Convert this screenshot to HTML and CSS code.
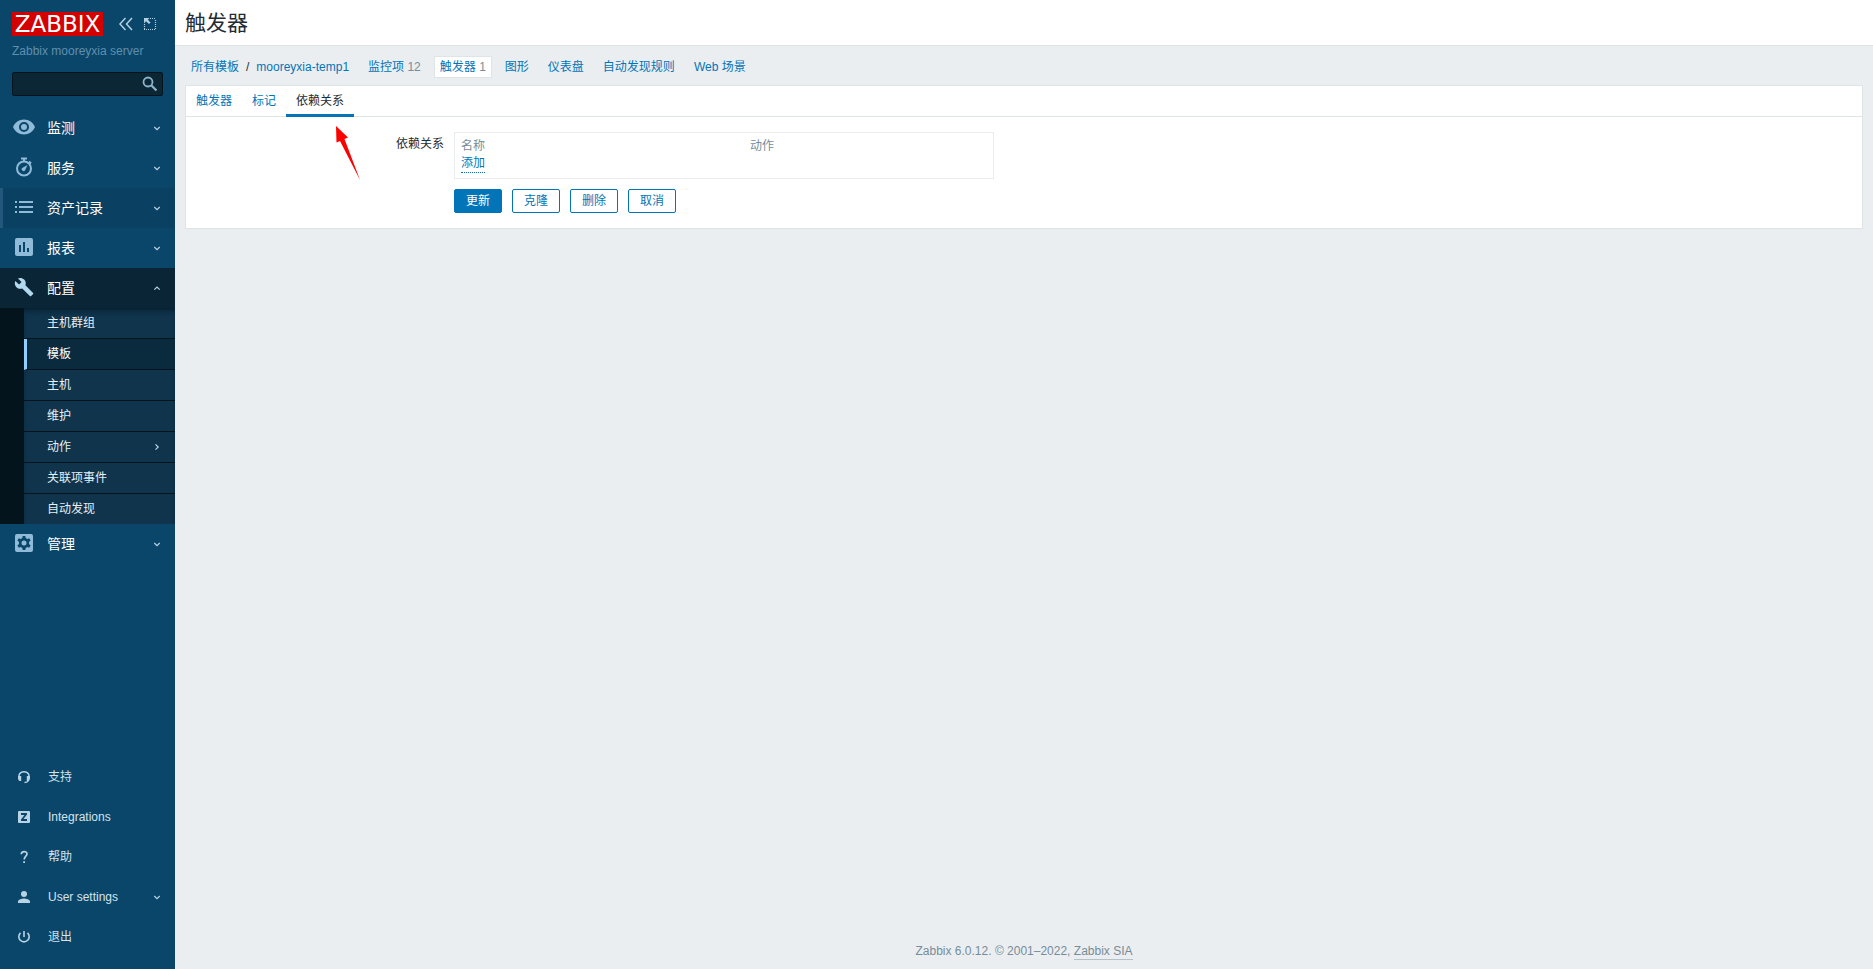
FILE: index.html
```html
<!DOCTYPE html>
<html lang="zh-CN">
<head>
<meta charset="utf-8">
<title>触发器</title>
<link rel="stylesheet" href="styles.css">
</head>
<body>
<svg class="sprite" aria-hidden="true">
  <symbol id="down" viewBox="0 0 8 8"><path d="M1.300 3 4 5.700 6.700 3" fill="none" stroke="currentColor" stroke-width="1.200"/></symbol>
  <symbol id="up" viewBox="0 0 8 8"><path d="M1.300 5.700 4 3 6.700 5.700" fill="none" stroke="currentColor" stroke-width="1.200"/></symbol>
  <symbol id="right" viewBox="0 0 8 8"><path d="M2.500 1.300 5.200 4 2.500 6.700" fill="none" stroke="currentColor" stroke-width="1.200"/></symbol>
</svg>
<aside class="sidebar">
  <div class="brand">
    <a class="logo" href="#">ZABBIX</a>
    <button class="tool" aria-label="收起侧边栏"><svg width="16" height="14" viewBox="0 0 16 14"><path d="M7.500 1 2 7l5.500 6M14 1 8.500 7l5.500 6" fill="none" stroke="currentColor" stroke-width="1.500"/></svg></button>
    <button class="tool" aria-label="隐藏侧边栏"><svg width="14" height="14" viewBox="0 0 14 14"><path d="M7 1.500h6M12.500 3v10M1.500 7v6M1 12.500h12" fill="none" stroke="currentColor" stroke-width="1.200" stroke-dasharray="1 1"/><path d="M1 1h5.500L4.800 2.700 7.500 5.500 6 7 3 4.300 1 6.500z" fill="currentColor"/></svg></button>
  </div>
  <div class="server">Zabbix mooreyxia server</div>
  <form class="search">
    <input class="search-input" type="text" aria-label="搜索">
    <button class="search-button" type="button" aria-label="搜索"><svg width="16" height="16" viewBox="0 0 16 16" fill="none" stroke="currentColor"><circle cx="6" cy="6" r="4.500" stroke-width="1.800"/><path d="m9.500 9.500 5 5" stroke-width="2.200"/></svg></button>
  </form>
  <nav class="menu">
    <a class="item" href="#"><svg class="icon" viewBox="0 0 24 24"><path d="M12 4.500C7 4.500 2.700 7.600 1 12c1.700 4.400 6 7.500 11 7.500s9.300-3.100 11-7.500c-1.700-4.400-6-7.500-11-7.500zM12 17a5 5 0 1 1 0-10 5 5 0 0 1 0 10zm0-8a3 3 0 1 0 0 6 3 3 0 0 0 0-6z"/></svg><span class="text">监测</span><svg class="chevron"><use href="#down"/></svg></a>
    <a class="item" href="#"><svg class="icon" viewBox="0 0 24 24"><g fill="none" stroke="currentColor"><circle cx="12" cy="13.500" r="7" stroke-width="2"/><path d="M9 3.500h6M12 3.500V6M17 6.500l2 2" stroke-width="2"/></g><path d="m15.500 10-2.300 5a1.800 1.800 0 1 1-2.600-2.300z"/></svg><span class="text">服务</span><svg class="chevron"><use href="#down"/></svg></a>
    <a class="item hovered" href="#"><svg class="icon" viewBox="0 0 24 24"><path d="M3 6h2v2H3zm4 0h14v2H7zM3 11h2v2H3zm4 0h14v2H7zm-4 5h2v2H3zm4 0h14v2H7z"/></svg><span class="text">资产记录</span><svg class="chevron"><use href="#down"/></svg></a>
    <a class="item" href="#"><svg class="icon" viewBox="0 0 24 24"><path d="M19 3H5a2 2 0 0 0-2 2v14c0 1.100.9 2 2 2h14a2 2 0 0 0 2-2V5a2 2 0 0 0-2-2zM9 17H7v-7h2zm4 0h-2V7h2zm4 0h-2v-4h2z"/></svg><span class="text">报表</span><svg class="chevron"><use href="#down"/></svg></a>
    <a class="item open" href="#"><svg class="icon" viewBox="0 0 24 24"><g transform="translate(2 2) scale(.84)"><path d="m22.700 19-9.100-9.100c.9-2.300.4-5-1.500-6.900-2-2-5-2.400-7.400-1.300L9 6 6 9 1.600 4.700C.4 7.100.9 10.100 2.900 12.100c1.900 1.900 4.600 2.400 6.900 1.500l9.100 9.100c.4.4 1 .4 1.400 0l2.300-2.300c.5-.4.5-1.100.1-1.400z"/></g></svg><span class="text">配置</span><svg class="chevron"><use href="#up"/></svg></a>
    <div class="submenu">
      <a class="sub" href="#">主机群组</a>
      <a class="sub current" href="#">模板</a>
      <a class="sub" href="#">主机</a>
      <a class="sub" href="#">维护</a>
      <a class="sub" href="#"><span class="text">动作</span><svg class="chevron"><use href="#right"/></svg></a>
      <a class="sub" href="#">关联项事件</a>
      <a class="sub" href="#">自动发现</a>
    </div>
    <a class="item" href="#"><svg class="icon" viewBox="0 0 24 24"><path fill-rule="evenodd" d="M5 3h14a2 2 0 0 1 2 2v14a2 2 0 0 1-2 2H5a2 2 0 0 1-2-2V5a2 2 0 0 1 2-2zm5.700 2-.4 2-1.600.9-1.900-.7-1.400 2.400 1.600 1.400v2l-1.600 1.400 1.400 2.400 1.900-.7 1.600.9.4 2h2.600l.4-2 1.600-.9 1.900.7 1.400-2.400L17 13v-2l1.600-1.400-1.400-2.400-1.900.7-1.600-.9-.4-2zM12 9.500a2.500 2.500 0 1 1 0 5 2.500 2.500 0 0 1 0-5z"/></svg><span class="text">管理</span><svg class="chevron"><use href="#down"/></svg></a>
  </nav>
  <nav class="menu-user">
    <a class="item small" href="#"><svg class="icon" viewBox="0 0 24 24"><path d="M7.500 15.500C5.500 11 7.500 6.700 12 6.700s6.500 4.300 4.500 8.800c-.7 1.500-2 2-4 2" fill="none" stroke="currentColor" stroke-width="1.500"/><path d="M6.200 11h3v5H7.700l-1.500-2zm11.600 0h-3v5h1.500l1.500-2z"/></svg><span class="text">支持</span></a>
    <a class="item small" href="#"><svg class="icon" viewBox="0 0 24 24"><path fill-rule="evenodd" d="M7 6h10a1 1 0 0 1 1 1v10a1 1 0 0 1-1 1H7a1 1 0 0 1-1-1V7a1 1 0 0 1 1-1zm2 2v2h3.500L9 14.500V16h6v-2h-3.500L15 9.500V8z"/></svg><span class="text">Integrations</span></a>
    <a class="item small" href="#"><svg class="icon" viewBox="0 0 24 24"><path d="M9.300 9.300C9.300 5.700 15 5.700 15 9c0 2-2.800 2.500-2.800 5.500" fill="none" stroke="currentColor" stroke-width="1.700"/><path d="M11.200 16.200H13V18h-1.800z"/></svg><span class="text">帮助</span></a>
    <a class="item small" href="#"><svg class="icon" viewBox="0 0 24 24"><circle cx="12" cy="9" r="3"/><path d="M6 18v-1.500c0-2 4-3 6-3s6 1 6 3V18z"/></svg><span class="text">User settings</span><svg class="chevron"><use href="#down"/></svg></a>
    <a class="item small" href="#"><svg class="icon" viewBox="0 0 24 24"><path d="M12 6v6M8.500 7.800a5.200 5.200 0 1 0 7 0" fill="none" stroke="currentColor" stroke-width="1.600"/></svg><span class="text">退出</span></a>
  </nav>
</aside>
<div class="page">
  <header class="header"><h1 class="title">触发器</h1></header>
  <main class="content">
    <nav class="crumbs">
      <span class="path"><a href="#">所有模板</a><span>/</span><a href="#">mooreyxia-temp1</a></span>
      <span class="crumb"><a href="#">监控项</a> <span class="count">12</span></span>
      <span class="crumb selected"><a href="#">触发器</a> <span class="count">1</span></span>
      <span class="crumb"><a href="#">图形</a></span>
      <span class="crumb"><a href="#">仪表盘</a></span>
      <span class="crumb"><a href="#">自动发现规则</a></span>
      <span class="crumb"><a href="#">Web 场景</a></span>
    </nav>
    <section class="card">
      <nav class="tabs">
        <a class="tab" href="#">触发器</a>
        <a class="tab" href="#">标记</a>
        <a class="tab active" href="#">依赖关系</a>
      </nav>
      <svg class="pointer" width="26" height="56" viewBox="0 0 26 56" aria-hidden="true"><path d="M1 1 13 12.500 9.500 14 25 55 5 16 1.500 17.500z" fill="#f00"/></svg>
      <form class="form">
        <div class="label" id="deps">依赖关系</div>
        <div class="frame">
          <table class="table" aria-labelledby="deps">
            <thead><tr><th>名称</th><th>动作</th></tr></thead>
            <tbody><tr><td colspan="2"><button class="add" type="button">添加</button></td></tr></tbody>
          </table>
        </div>
        <div class="actions">
          <button class="button primary" type="button">更新</button>
          <button class="button" type="button">克隆</button>
          <button class="button" type="button">删除</button>
          <button class="button" type="button">取消</button>
        </div>
      </form>
    </section>
  </main>
  <footer class="footer">Zabbix 6.0.12. © 2001–2022, <a class="footer-link" href="#">Zabbix SIA</a></footer>
</div>
</body>
</html>
```
FILE: styles.css
```css
* { box-sizing: border-box; }
body {
  margin: 0;
  min-height: 100vh;
  display: flex;
  background: #ebeef0;
  color: #1f2c33;
  font: 12px/18px "Liberation Sans", "Noto Sans CJK SC", sans-serif;
}
a { color: #0275b8; text-decoration: none; }
button, input { font: inherit; }
.sprite { position: absolute; width: 0; height: 0; }

.sidebar {
  flex: 0 0 175px;
  min-width: 0;
  display: flex;
  flex-direction: column;
  padding-bottom: 12px;
  background: #0a466a;
}
.brand { display: flex; align-items: center; padding: 12px 12px 0; }
.logo {
  flex: none;
  width: 91px;
  margin-right: 15px;
  background: #d40000;
  color: #fff;
  font: 23px/24px "DejaVu Sans", sans-serif;
  text-align: center;
}
.tool { display: flex; flex: none; padding: 0; margin-right: 9px; border: 0; background: none; color: #b3d0e0; }
.tool:last-child { margin-right: 0; }
.server { padding: 6px 12px 0; color: #5f8fae; }
.search { display: flex; align-items: center; height: 24px; margin: 12px 12px; border: 1px solid #04141d; border-radius: 2px; background: #0b2736; }
.search-input { flex: 1; width: 0; min-width: 0; padding: 0 4px; border: 0; outline: 0; background: none; color: #fff; }
.search-button { display: flex; padding: 0 4px; border: 0; background: none; color: #8fb3c8; }

.menu { flex: 1; }
.item { display: flex; align-items: center; height: 40px; padding: 0 14px 0 12px; color: #fff; font-size: 14px; }
.icon { width: 24px; height: 24px; margin: 0 11px 0 0; flex: none; color: #8fbbd8; fill: currentColor; }
.menu .icon { margin: -2px 11px 0 0; }
.text { flex: 1; }
.chevron { width: 8px; height: 8px; color: #b8d4e4; }
.hovered { padding-left: 9px; border-left: 3px solid #23587c; background: #0a4062; }
.open { background: #0a2636; }
.open .icon { color: #b3d9ee; }
.small { color: #d2e3ed; font-size: 12px; }
.small .icon { margin-right: 12px; color: #b8d4e4; }
.submenu { border-left: 24px solid #04141d; background: #0f344c; box-shadow: inset 0 5px 6px -4px #04141d; }
.sub { display: flex; align-items: center; height: 31px; padding: 0 14px 0 23px; border-bottom: 1px solid #04141d; color: #e6f0f5; }
.sub:last-child { height: 30px; border-bottom: 0; }
.current { padding-left: 20px; border-left: 3px solid #8fcfff; background: #0a2a3d; color: #fff; }

.page { flex: 1; min-width: 0; display: flex; flex-direction: column; }
.header { height: 46px; padding: 9px 10px; border-bottom: 1px solid #dfe4e7; background: #fff; }
.title { margin: 0; font-size: 21px; line-height: 28px; font-weight: 400; }
.content { flex: 1; padding: 10px 10px 0; }
.crumbs { display: flex; align-items: center; gap: 7px; height: 22px; }
.path { display: flex; gap: 7px; padding: 0 6px; }
.crumb { padding: 2px 6px; }
.count { color: #768d99; }
.selected { padding: 1px 5px; border: 1px solid #dfe4e7; background: #fff; }
.card { position: relative; margin-top: 7px; border: 1px solid #dfe4e7; background: #fff; }
.tabs { display: flex; height: 31px; border-bottom: 1px solid #dfe4e7; }
.tab { height: 31px; padding: 6px 10px; }
.active { border-bottom: 3px solid #0275b8; color: #1f2c33; }
.pointer { position: absolute; left: 149px; top: 39px; }
.form { display: grid; grid-template-columns: 258px minmax(0, 540px); column-gap: 10px; row-gap: 10px; padding: 15px 0; }
.label { padding-top: 3px; text-align: right; }
.frame { padding: 3px 6px 4px; border: 1px solid #ebeef0; }
.table { width: 100%; border-collapse: collapse; table-layout: fixed; }
.table th { height: 19px; padding: 0; color: #768d99; font-weight: 400; text-align: left; width: 289px; }
.table th + th { width: auto; }
.table td { height: 19px; padding: 0; line-height: 16px; vertical-align: top; }
.add { display: block; padding: 0; border: 0; border-bottom: 1px dotted #0275b8; background: none; color: #0275b8; line-height: 17px; }
.actions { grid-column: 2; display: flex; gap: 10px; }
.button { width: 48px; height: 24px; padding: 0; border: 1px solid #0275b8; border-radius: 2px; background: #fff; color: #0275b8; }
.primary { background: #0275b8; color: #fff; }
.footer { padding: 0 10px 9px; text-align: center; color: #768d99; }
.footer-link { display: inline-block; line-height: 16px; border-bottom: 1px solid #b5c1c8; color: #768d99; }
```
